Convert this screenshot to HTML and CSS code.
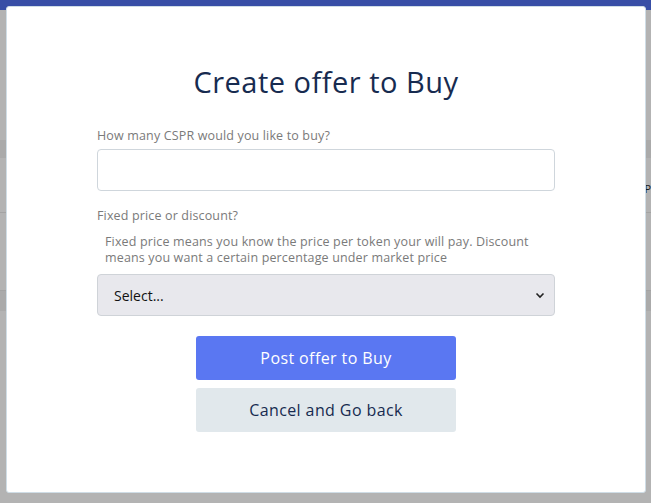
FILE: index.html
```html
<!DOCTYPE html>
<html>
<head>
<meta charset="utf-8">
<link rel="stylesheet" href="styles.css">
</head>
<body>
<div class="page">
  <div class="topbar"></div>
  <div class="band band-a"></div>
  <div class="row row-b"><span class="edge-text">P</span></div>
  <div class="row row-c"></div>
  <div class="band band-d"></div>
</div>
<div class="modal">
  <div class="modal-body">
    <h1 class="title">Create offer to Buy</h1>
    <label class="label">How many CSPR would you like to buy?</label>
    <input class="input" type="text">
    <label class="label label-2">Fixed price or discount?</label>
    <p class="help">Fixed price means you know the price per token your will pay. Discount means you want a certain percentage under market price</p>
    <div class="select">
      <span>Select...</span>
      <svg class="chev" width="10" height="7" viewBox="0 0 10 7"><path d="M1.5 1.5 L5 5 L8.5 1.5" fill="none" stroke="#222" stroke-width="1.6"/></svg>
    </div>
    <div class="actions">
      <button class="btn btn-primary">Post offer to Buy</button>
      <button class="btn btn-secondary">Cancel and Go back</button>
    </div>
  </div>
</div>
</body>
</html>
```
FILE: styles.css
```css
* { box-sizing: border-box; }
html, body { margin: 0; padding: 0; }
body {
  width: 651px;
  height: 503px;
  overflow: hidden;
  background: #b3b3b3;
  font-family: "Open Sans", "DejaVu Sans", sans-serif;
}
.page { position: relative; height: 503px; }
.topbar { height: 10px; background: #384ea6; }
.band { background: #aaaaaa; }
.band-a { margin-top: 130px; height: 18px; }
.row { border-bottom: 1px solid #a3a3a3; }
.row-b { height: 55px; position: relative; }
.edge-text { position: absolute; right: 0; top: 23px; font-size: 11px; color: #1a1a1a; }
.row-c { height: 78px; }
.band-d { height: 20px; }

.modal {
  position: absolute;
  top: 6px;
  left: 6px;
  width: 640px;
  height: 487px;
  background: #fff;
  border: 1px solid #cfdde6;
  border-radius: 3px;
}
.modal-body {
  width: 458px;
  margin: 0 auto;
  padding-top: 56px;
  display: flex;
  flex-direction: column;
}
.title {
  margin: 0 0 26px;
  text-align: center;
  font-size: 29px;
  letter-spacing: 0.5px;
  font-weight: 500;
  line-height: 38px;
  color: #172b50;
}
.label {
  font-size: 12.5px;
  letter-spacing: 0.15px;
  color: #7a7a7a;
  line-height: 18px;
}
.input {
  margin-top: 4px;
  height: 42px;
  border: 1px solid #cfd6dc;
  border-radius: 4px;
  background: #fff;
}
.label-2 { margin-top: 16px; }
.help {
  margin: 9px 0 0;
  padding-left: 8px;
  font-size: 12.5px;
  letter-spacing: 0.15px;
  line-height: 16px;
  color: #7a7a7a;
}
.select {
  margin-top: 8px;
  height: 42px;
  background: #e8e8ed;
  border: 1px solid #cfd3d8;
  border-radius: 4px;
  display: flex;
  align-items: center;
  justify-content: space-between;
  padding: 0 9px 0 16px;
  font-size: 14px;
  color: #111;
}
.chev { display: block; }
.actions {
  margin-top: 20px;
  display: flex;
  flex-direction: column;
  align-items: center;
  gap: 8px;
}
.btn {
  width: 260px;
  height: 44px;
  border: none;
  border-radius: 3px;
  font-family: inherit;
  font-size: 16px;
  letter-spacing: 0.4px;
  cursor: pointer;
}
.btn-primary { background: #5a77f2; color: #fff; }
.btn-secondary { background: #e1e8ec; color: #172b50; }
```
